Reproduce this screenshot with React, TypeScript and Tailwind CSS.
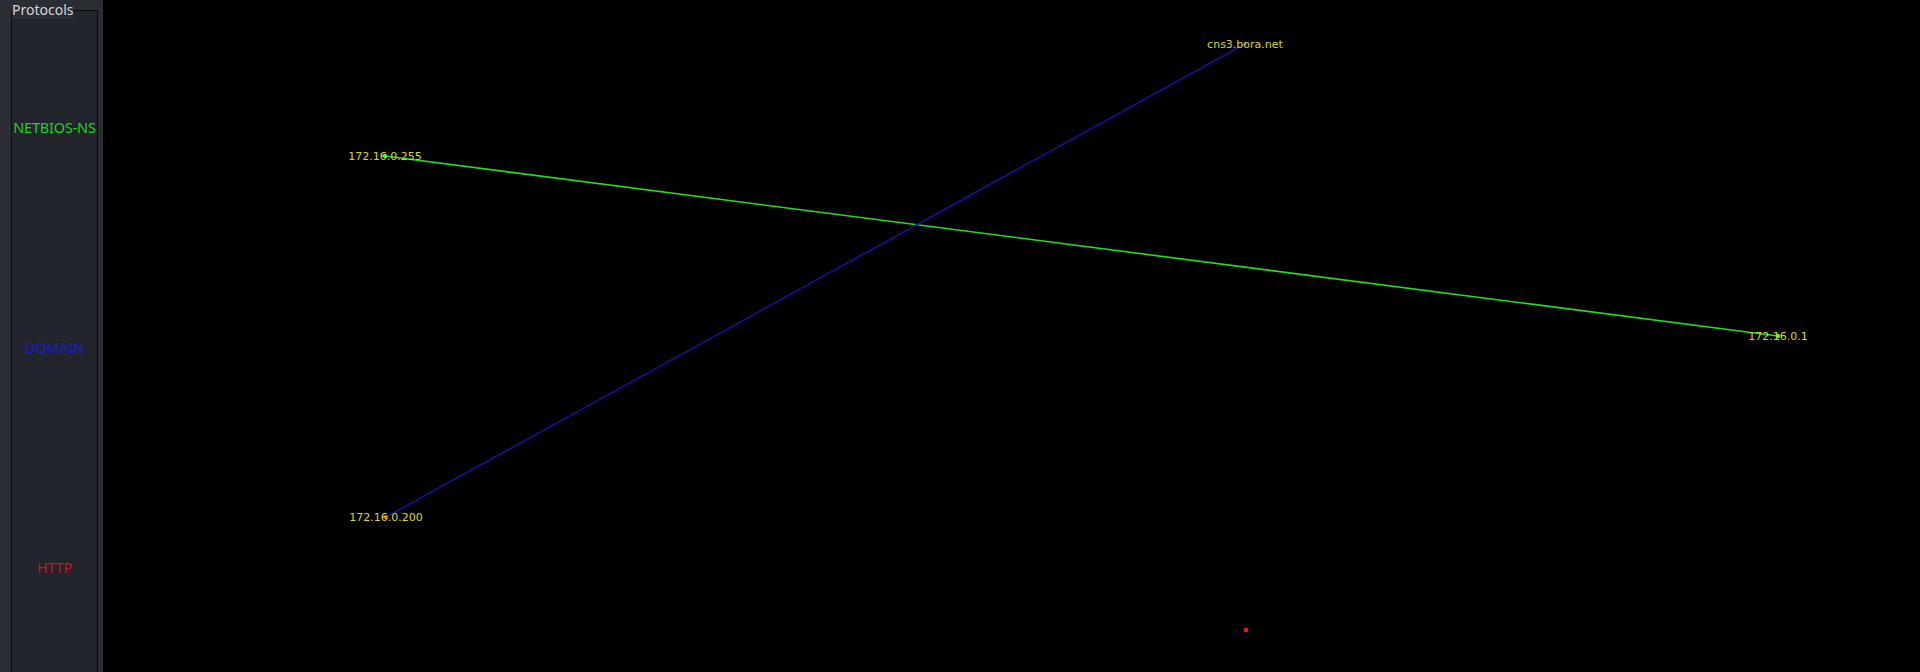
const protocols = [
  { name: 'NETBIOS-NS', color: 'text-[#1fd01f]' },
  { name: 'DOMAIN', color: 'text-[#1c1ccc]' },
  { name: 'HTTP', color: 'text-[#d0101c]' },
]

const nodes = [
  { id: '255', label: '172.16.0.255', x: 385, y: 156, dot: '#3cf03c' },
  { id: '200', label: '172.16.0.200', x: 386, y: 517, dot: '#ff3a1a' },
  { id: 'cns', label: 'cns3.bora.net', x: 1245, y: 44, dot: '#3030c0' },
  { id: '1', label: '172.16.0.1', x: 1778, y: 336, dot: '#3cf03c' },
]

const links = [
  { from: '255', to: '1', color: '#22dd22' },
  { from: '200', to: 'cns', color: '#12129a' },
]

export default function App() {
  const byId = Object.fromEntries(nodes.map((n) => [n.id, n]))

  return (
    <div className="flex h-[672px] w-full overflow-hidden bg-black font-['Noto_Sans',sans-serif]">
      {/* Protocols sidebar */}
      <div className="relative h-full w-[103px] shrink-0 border-r-[4px] border-[#2a2d33] bg-[#2a2d33]">
        <div className="ml-[11px] mt-[10px] flex h-[700px] w-[87px] flex-col border border-[#0c0d10] bg-[#22252c]">
          <div className="h-[96px] shrink-0" />
          {protocols.map((p) => (
            <div key={p.name} className="flex h-[220px] shrink-0 items-start justify-center">
              <span className={`whitespace-nowrap text-[14.5px] leading-[40px] tracking-[-0.2px] ${p.color}`}>
                {p.name}
              </span>
            </div>
          ))}
        </div>
        <span className="absolute left-[12px] top-[1px] bg-[#2a2d33] pr-[1px] text-[14px] leading-[18px] text-[#d6d6d6]">
          Protocols
        </span>
      </div>

      {/* Graph canvas */}
      <div className="relative h-full flex-1">
        <svg className="absolute inset-0 h-full w-full" viewBox="103 0 1817 672">
          {links.map((l) => {
            const a = byId[l.from]
            const b = byId[l.to]
            return (
              <line
                key={l.from + l.to}
                x1={a.x}
                y1={a.y}
                x2={b.x}
                y2={b.y}
                stroke={l.color}
                strokeWidth={1.6}
              />
            )
          })}
          {nodes.map((n) => (
            <g key={n.id}>
              <circle cx={n.x} cy={n.y} r={2.2} fill={n.dot} />
              <text
                x={n.x}
                y={n.y}
                textAnchor="middle"
                dominantBaseline="central"
                fontSize={11}
                fill="#d8d824"
                fontFamily="DejaVu Sans, sans-serif"
              >
                {n.label}
              </text>
            </g>
          ))}
          <circle cx={1246} cy={630} r={2.4} fill="#ff1010" />
        </svg>
      </div>
    </div>
  )
}
